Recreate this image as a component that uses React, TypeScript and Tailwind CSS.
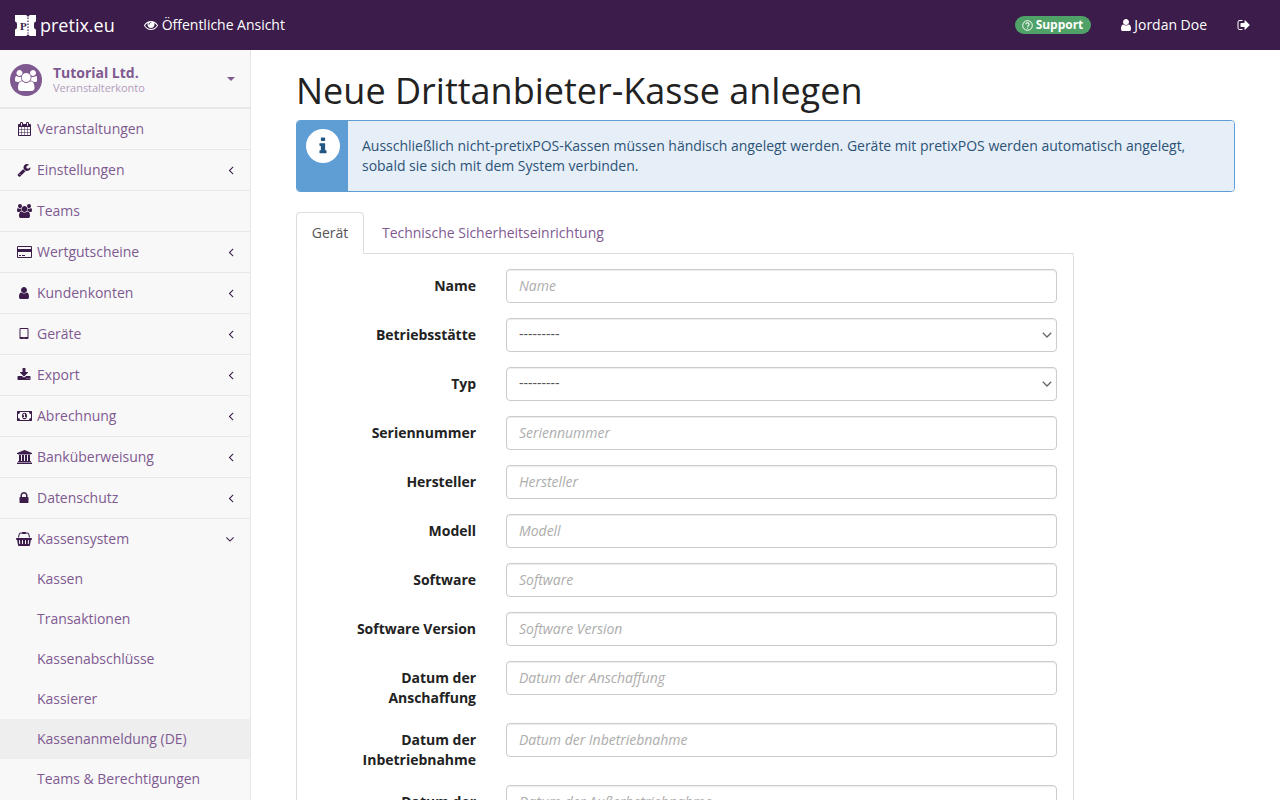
// icon outlines follow the old 1792-unit icon grid used by the screenshot
const ICONS = {
  calendar: { w: 1664, d: "M128 1664h288v-288h-288v288zm352 0h320v-288h-320v288zm-352-352h288v-320h-288v320zm352 0h320v-320h-320v320zm-352-384h288v-288h-288v288zm736 736h320v-288h-320v288zm-384-736h320v-288h-320v288zm768 736h288v-288h-288v288zm-384-352h320v-320h-320v320zm-352-864v-288q0-13-9.5-22.5t-22.5-9.5h-64q-13 0-22.5 9.5t-9.5 22.5v288q0 13 9.5 22.5t22.5 9.5h64q13 0 22.5-9.5t9.5-22.5zm736 864h288v-320h-288v320zm-384-384h320v-288h-320v288zm384 0h288v-288h-288v288zm32-480v-288q0-13-9.5-22.5t-22.5-9.5h-64q-13 0-22.5 9.5t-9.5 22.5v288q0 13 9.5 22.5t22.5 9.5h64q13 0 22.5-9.5t9.5-22.5zm384-64v1280q0 52-38 90t-90 38h-1408q-52 0-90-38t-38-90v-1280q0-52 38-90t90-38h128v-96q0-66 47-113t113-47h64q66 0 113 47t47 113v96h384v-96q0-66 47-113t113-47h64q66 0 113 47t47 113v96h128q52 0 90 38t38 90z" },
  wrench: { w: 1792, d: "M448 1472q0-26-19-45t-45-19-45 19-19 45 19 45 45 19 45-19 19-45zm644-420l-682 682q-37 37-90 37-52 0-91-37l-106-108q-38-36-38-90 0-53 38-91l681-681q39 98 114.5 173.5t173.5 114.5zm634-435q0 39-23 106-47 134-164.5 217.5t-258.5 83.5q-185 0-316.5-131.5t-131.5-316.5 131.5-316.5 316.5-131.5q58 0 121.5 16.5t107.5 46.5q16 11 16 28t-16 28l-293 169v224l193 107q5-3 79-48.5t135.5-81 70.5-35.5q15 0 23.5 10t8.5 25z" },
  users: { w: 1920, d: "M593 896q-162 5-265 128h-134q-82 0-138-40.5t-56-118.5q0-353 124-353 6 0 43.5 21t97.5 42.5 119 21.5q67 0 133-23-5 37-5 66 0 139 81 256zm1071 637q0 120-73 189.5t-194 69.5h-874q-121 0-194-69.5t-73-189.5q0-53 3.5-103.5t14-109 26.5-108.5 43-97.5 62-81 85.5-53.5 111.5-20q10 0 43 21.5t73 48 107 48 135 21.5 135-21.5 107-48 73-48 43-21.5q61 0 111.5 20t85.5 53.5 62 81 43 97.5 26.5 108.5 14 109 3.5 103.5zm-1024-1277q0 106-75 181t-181 75-181-75-75-181 75-181 181-75 181 75 75 181zm704 384q0 159-112.5 271.5t-271.5 112.5-271.5-112.5-112.5-271.5 112.5-271.5 271.5-112.5 271.5 112.5 112.5 271.5zm576 225q0 78-56 118.5t-138 40.5h-134q-103-123-265-128 81-117 81-256 0-29-5-66 66 23 133 23 59 0 119-21.5t97.5-42.5 43.5-21q124 0 124 353zm-128-609q0 106-75 181t-181 75-181-75-75-181 75-181 181-75 181 75 75 181z" },
  card: { w: 1920, d: "M1760 128q66 0 113 47t47 113v1216q0 66-47 113t-113 47h-1600q-66 0-113-47t-47-113v-1216q0-66 47-113t113-47h1600zm-1600 128q-13 0-22.5 9.5t-9.5 22.5v224h1664v-224q0-13-9.5-22.5t-22.5-9.5h-1600zm1600 1280q13 0 22.5-9.5t9.5-22.5v-608h-1664v608q0 13 9.5 22.5t22.5 9.5h1600zm-1504-128v-128h256v128h-256zm384 0v-128h384v128h-384z" },
  user: { w: 1792, d: "M1536 1399q0 109-62.5 187t-150.5 78h-854q-88 0-150.5-78t-62.5-187q0-85 8.5-160.5t31.5-152 58.5-131 94-89 134.5-34.5q131 128 313 128t313-128q76 0 134.5 34.5t94 89 58.5 131 31.5 152 8.5 160.5zm-256-887q0 159-112.5 271.5t-271.5 112.5-271.5-112.5-112.5-271.5 112.5-271.5 271.5-112.5 271.5 112.5 112.5 271.5z" },
  tablet: { w: 1792, d: "M960 1408q0-26-19-45t-45-19-45 19-19 45 19 45 45 19 45-19 19-45zm384-160v-960q0-13-9.5-22.5t-22.5-9.5h-832q-13 0-22.5 9.5t-9.5 22.5v960q0 13 9.5 22.5t22.5 9.5h832q13 0 22.5-9.5t9.5-22.5zm128-960v1088q0 66-47 113t-113 47h-832q-66 0-113-47t-47-113v-1088q0-66 47-113t113-47h832q66 0 113 47t47 113z" },
  download: { w: 1792, d: "M1344 1344q0-26-19-45t-45-19-45 19-19 45 19 45 45 19 45-19 19-45zm256 0q0-26-19-45t-45-19-45 19-19 45 19 45 45 19 45-19 19-45zm128-224v320q0 40-28 68t-68 28h-1472q-40 0-68-28t-28-68v-320q0-40 28-68t68-28h465l135 136q58 56 136 56t136-56l136-136h464q40 0 68 28t28 68zm-325-569q17 41-14 70l-448 448q-18 19-45 19t-45-19l-448-448q-31-29-14-70 17-39 59-39h256v-448q0-26 19-45t45-19h256q26 0 45 19t19 45v448h256q42 0 59 39z" },
  money: { w: 1920, d: "M768 1152h384v-96h-128v-448h-114l-148 137 77 80q42-37 55-57h2v288h-128v96zm512-256q0 70-21 142t-59.5 134-101.5 101-138 39-138-39-101.5-101-59.5-134-21-142 21-142 59.5-134 101.5-101 138-39 138 39 101.5 101 59.5 134 21 142zm512 256v-512q-106 0-181-75t-75-181h-1152q0 106-75 181t-181 75v512q106 0 181 75t75 181h1152q0-106 75-181t181-75zm128-832v1152q0 26-19 45t-45 19h-1792q-26 0-45-19t-19-45v-1152q0-26 19-45t45-19h1792q26 0 45 19t19 45z" },
  bank: { w: 1920, d: "M960 0l960 384v128h-128q0 26-20.5 45t-48.5 19h-1526q-28 0-48.5-19t-20.5-45h-128v-128zm-704 640h256v768h128v-768h256v768h128v-768h256v768h128v-768h256v768h59q28 0 48.5 19t20.5 45v64h-1664v-64q0-26 20.5-45t48.5-19h59v-768zm1595 960q28 0 48.5 19t20.5 45v128h-1920v-128q0-26 20.5-45t48.5-19h1782z" },
  lock: { w: 1792, d: "M640 768h512v-192q0-106-75-181t-181-75-181 75-75 181v192zm832 96v576q0 40-28 68t-68 28h-960q-40 0-68-28t-28-68v-576q0-40 28-68t68-28h32v-192q0-184 132-316t316-132 316 132 132 316v192h32q40 0 68 28t28 68z" },
  basket: { w: 2048, d: "M1920 768q53 0 90.5 37.5t37.5 90.5-37.5 90.5-90.5 37.5h-15l-115 662q-8 46-44 76t-82 30h-1280q-46 0-82-30t-44-76l-115-662h-15q-53 0-90.5-37.5t-37.5-90.5 37.5-90.5 90.5-37.5h1792zm-1435 800q26-2 43.5-22.5t15.5-46.5l-32-416q-2-26-22.5-43.5t-46.5-15.5-43.5 22.5-15.5 46.5l32 416q2 25 20.5 42t43.5 17h5zm411-64v-416q0-26-19-45t-45-19-45 19-19 45v416q0 26 19 45t45 19 45-19 19-45zm384 0v-416q0-26-19-45t-45-19-45 19-19 45v416q0 26 19 45t45 19 45-19 19-45zm352 5l32-416q2-26-15.5-46.5t-43.5-22.5-46.5 15.5-22.5 43.5l-32 416q-2 26 15.5 46.5t43.5 22.5h5q25 0 43.5-17t20.5-42zm-1156-1217l-93 412h-132l101-441q19-88 89-143.5t160-55.5h167q0-26 19-45t45-19h384q26 0 45 19t19 45h167q90 0 160 55.5t89 143.5l101 441h-132l-93-412q-11-44-45.5-72t-79.5-28h-167q0 26-19 45t-45 19h-384q-26 0-45-19t-19-45h-167q-45 0-79.5 28t-45.5 72z" },
  eye: { w: 1792, d: "M1664 960q-152-236-381-353 61 104 61 225 0 185-131.5 316.5t-316.5 131.5-316.5-131.5-131.5-316.5q0-121 61-225-229 117-381 353 133 205 333.5 326.5t434.5 121.5 434.5-121.5 333.5-326.5zm-720-384q0-20-14-34t-34-14q-125 0-214.5 89.5t-89.5 214.5q0 20 14 34t34 14 34-14 14-34q0-86 61-147t147-61q20 0 34-14t14-34zm848 384q0 34-20 69-140 230-376.5 368.5t-499.5 138.5-499.5-139-376.5-368q-20-35-20-69t20-69q140-229 376.5-368t499.5-139 499.5 139 376.5 368q20 35 20 69z" },
  signout: { w: 1664, d: "M704 1440q0 4 1 20t.5 26.5-3 23.5-10 19.5-20.5 6.5h-320q-119 0-203.5-84.5t-84.5-203.5v-704q0-119 84.5-203.5t203.5-84.5h320q13 0 22.5 9.5t9.5 22.5q0 4 1 20t.5 26.5-3 23.5-10 19.5-20.5 6.5h-320q-66 0-113 47t-47 113v704q0 66 47 113t113 47h312l11.5 1 11.5 3 8 5.5 7 9 2 13.5zm928-544q0 26-19 45l-544 544q-19 19-45 19t-45-19-19-45v-288h-448q-26 0-45-19t-19-45v-384q0-26 19-45t45-19h448v-288q0-26 19-45t45-19 45 19l544 544q19 19 19 45z" },
  info: { w: 1792, d: "M1216 1344v128q0 26-19 45t-45 19h-512q-26 0-45-19t-19-45v-128q0-26 19-45t45-19h64v-384h-64q-26 0-45-19t-19-45v-128q0-26 19-45t45-19h384q26 0 45 19t19 45v576h64q26 0 45 19t19 45zm-128-1152v192q0 26-19 45t-45 19h-256q-26 0-45-19t-19-45v-192q0-26 19-45t45-19h256q26 0 45 19t19 45z" },
  angleLeft: { w: 1792, d: "M1203 544q0 13-10 23l-393 393 393 393q10 10 10 23t-10 23l-50 50q-10 10-23 10t-23-10l-466-466q-10-10-10-23t10-23l466-466q10-10 23-10t23 10l50 50q10 10 10 23z" },
  angleDown: { w: 1792, d: "M1395 736q0 13-10 23l-466 466q-10 10-23 10t-23-10l-466-466q-10-10-10-23t10-23l50-50q10-10 23-10t23 10l393 393 393-393q10-10 23-10t23 10l50 50q10 10 10 23z" },
};

type IconName = keyof typeof ICONS;

function Icon({ name, size = 14 }: { name: IconName; size?: number }) {
  const { w, d } = ICONS[name];
  return (
    <svg width={(w / 1792) * size} height={size} viewBox={`0 0 ${w} 1792`} fill="currentColor" className="shrink-0">
      <path d={d} />
    </svg>
  );
}

const NAV: { label: string; icon: IconName; arrow?: "left" | "down" }[] = [
  { label: "Veranstaltungen", icon: "calendar" },
  { label: "Einstellungen", icon: "wrench", arrow: "left" },
  { label: "Teams", icon: "users" },
  { label: "Wertgutscheine", icon: "card", arrow: "left" },
  { label: "Kundenkonten", icon: "user", arrow: "left" },
  { label: "Geräte", icon: "tablet", arrow: "left" },
  { label: "Export", icon: "download", arrow: "left" },
  { label: "Abrechnung", icon: "money", arrow: "left" },
  { label: "Banküberweisung", icon: "bank", arrow: "left" },
  { label: "Datenschutz", icon: "lock", arrow: "left" },
  { label: "Kassensystem", icon: "basket", arrow: "down" },
];

const SUB = ["Kassen", "Transaktionen", "Kassenabschlüsse", "Kassierer", "Kassenanmeldung (DE)", "Teams & Berechtigungen"];

const FIELDS: { label: string; type?: "select" }[] = [
  { label: "Name" },
  { label: "Betriebsstätte", type: "select" },
  { label: "Typ", type: "select" },
  { label: "Seriennummer" },
  { label: "Hersteller" },
  { label: "Modell" },
  { label: "Software" },
  { label: "Software Version" },
  { label: "Datum der Anschaffung" },
  { label: "Datum der Inbetriebnahme" },
  { label: "Datum der Außerbetriebnahme" },
];

function Logo() {
  return (
    <svg width="21" height="21" viewBox="0 0 21 21" className="shrink-0">
      <path
        d="M0 0h11.5a1.5 1.5 0 0 0 3 0H21v6.5a2.5 2.5 0 0 0-2 2.5v3a2.5 2.5 0 0 0 2 2.500V21h-6.500a1.500 1.500 0 0 0-3 0H0v-6.500a2.500 2.500 0 0 0 2-2.500V9a2.500 2.500 0 0 0-2-2.500z"
        fill="#fff"
      />
      <path d="M13 2.500v16" stroke="#3b1c4a" strokeWidth="1.200" strokeDasharray="1.500 1.500" />
      <text x="5" y="15" fontSize="11" fontWeight="700" fontFamily="Liberation Serif, serif" fill="#3b1c4a">
        P
      </text>
    </svg>
  );
}

function Sidebar() {
  return (
    <aside className="w-[251px] shrink-0 bg-[#f8f8f8] border-r border-[#e7e7e7]">
      <div className="h-[59px] flex items-center pl-[10px] pr-[15px] pt-[3px] border-b-2 border-[#e7e7e7]">
        <div className="w-8 h-8 rounded-full bg-[#7f5a91] flex items-center justify-center text-white">
          <Icon name="users" size={21} />
        </div>
        <div className="ml-[11px] flex-1">
          <div className="text-[14px] leading-[16px] font-bold text-[#7f5a91]">Tutorial Ltd.</div>
          <div className="text-[11px] leading-[14px] tracking-[-0.04px] text-[#b29cbd]">Veranstalterkonto</div>
        </div>
        <div className="w-0 h-0 -mt-[3px] border-x-4 border-x-transparent border-t-4 border-t-[#7f5a91]" />
      </div>
      {NAV.map((item) => (
        <div
          key={item.label}
          className={`flex items-center pl-[15px] text-[#7f5a91] ${
            item.arrow === "down" ? "h-10 pr-[13px]" : "h-[41px] pr-[12px] border-b border-[#e7e7e7]"
          }`}
        >
          <span className="w-[18px] flex justify-center text-[#3b1c4a] mr-[4px]">
            <Icon name={item.icon} />
          </span>
          <span className="flex-1">{item.label}</span>
          {item.arrow === "left" && (
            <span className="text-[#3b1c4a]">
              <Icon name="angleLeft" />
            </span>
          )}
          {item.arrow === "down" && (
            <span className="text-[#3b1c4a]">
              <Icon name="angleDown" />
            </span>
          )}
        </div>
      ))}
      {SUB.map((label) => (
        <div
          key={label}
          className={`h-10 flex items-center pl-[37px] text-[#7f5a91] ${label === "Kassenanmeldung (DE)" ? "bg-[#eeeeee]" : ""}`}
        >
          {label}
        </div>
      ))}
    </aside>
  );
}

function Field({ label, type }: { label: string; type?: "select" }) {
  return (
    <div className="flex items-start gap-[30px] mb-[15px]">
      <label className="w-[160px] pt-[7px] text-right font-bold text-[#222222] leading-5">{label}</label>
      {type === "select" ? (
        <div className="relative">
          <select className="block appearance-none w-[551px] h-[34px] border border-[#cccccc] rounded-[4px] pl-3 pr-1 pb-[2px] bg-white text-[#555555] shadow-[inset_0_1px_1px_rgba(0,0,0,0.075)]">
            <option>---------</option>
          </select>
          <svg width="10" height="6" viewBox="0 0 10 6" className="absolute right-[5px] top-[14px]" fill="none" stroke="#666666" strokeWidth="1.300">
            <path d="M.8.8 5 5 9.200.8" />
          </svg>
        </div>
      ) : (
        <input
          placeholder={label}
          className="w-[551px] h-[34px] border border-[#cccccc] rounded-[4px] px-3 pb-[2px] bg-white text-[#555555] italic placeholder:text-[#adadad] shadow-[inset_0_1px_1px_rgba(0,0,0,0.075)]"
        />
      )}
    </div>
  );
}

export default function App() {
  return (
    <div className="h-[800px] overflow-hidden bg-white text-[14px] leading-5 tracking-[-0.02px] text-[#222222] font-['Open_Sans',sans-serif]">
      <nav className="h-[50px] bg-[#3b1c4a] text-white flex items-center pl-[15px] pr-[30px]">
        <Logo />
        <span className="ml-[4px] text-[18px] tracking-normal">pretix.eu</span>
        <span className="ml-[29px] flex items-center gap-[4px]">
          <Icon name="eye" />
          Öffentliche Ansicht
        </span>
        <span className="ml-auto h-[18px] pl-[7px] pr-[8px] rounded-full bg-[#50a167] flex items-center gap-[3px] text-[12px] font-bold">
          <svg width="11" height="11" viewBox="0 0 11 11" fill="none" stroke="currentColor" className="shrink-0">
            <circle cx="5.500" cy="5.500" r="4.800" />
            <path d="M3.900 4.300a1.600 1.600 0 1 1 2.400 1.400c-.5.300-.8.600-.8 1.100" strokeWidth="1.100" />
            <path d="M5.500 7.600v1.100" strokeWidth="1.100" />
          </svg>
          Support
        </span>
        <span className="ml-[28px] flex items-center gap-[1px]">
          <Icon name="user" />
          Jordan Doe
        </span>
        <span className="ml-[30px]">
          <Icon name="signout" />
        </span>
      </nav>
      <div className="flex">
        <Sidebar />
        <main className="w-[984px] pl-[45px]">
          <h1 className="text-[36px] leading-[40px] tracking-normal mt-[21px] mb-[9px] text-[#222222]">Neue Drittanbieter-Kasse anlegen</h1>
          <div className="w-[939px] h-[72px] flex rounded-[4px] border border-[#5f9dd5] overflow-hidden">
            <div className="w-[51px] shrink-0 bg-[#5f9dd5] flex justify-center pt-[8px]">
              <div className="w-[34px] h-[34px] rounded-full bg-white flex items-center justify-center text-[#245682]">
                <Icon name="info" size={20} />
              </div>
            </div>
            <div className="flex-1 bg-[#e6eef7] text-[#2c5378] tracking-[-0.012px] pl-[14px] pr-[15px] pt-[15px]">
              Ausschließlich nicht-pretixPOS-Kassen müssen händisch angelegt werden. Geräte mit pretixPOS werden automatisch angelegt, sobald sie sich mit dem System verbinden.
            </div>
          </div>
          <div className="mt-5 w-[778px]">
            <div className="flex h-[42px] border-b border-[#dddddd]">
              <div className="w-[68px] h-[42px] flex items-center justify-center border border-[#dddddd] border-b-white rounded-t-[4px] bg-white text-[#555555]">
                Gerät
              </div>
              <div className="h-[42px] flex items-center px-[18px] text-[#7f5a91]">Technische Sicherheitseinrichtung</div>
            </div>
            <div className="border border-t-0 border-[#dddddd] rounded-b-[4px] rounded-tr-[4px] pl-[19px] pt-[15px]">
              {FIELDS.map((f) => (
                <Field key={f.label} label={f.label} type={f.type} />
              ))}
            </div>
          </div>
        </main>
      </div>
    </div>
  );
}
